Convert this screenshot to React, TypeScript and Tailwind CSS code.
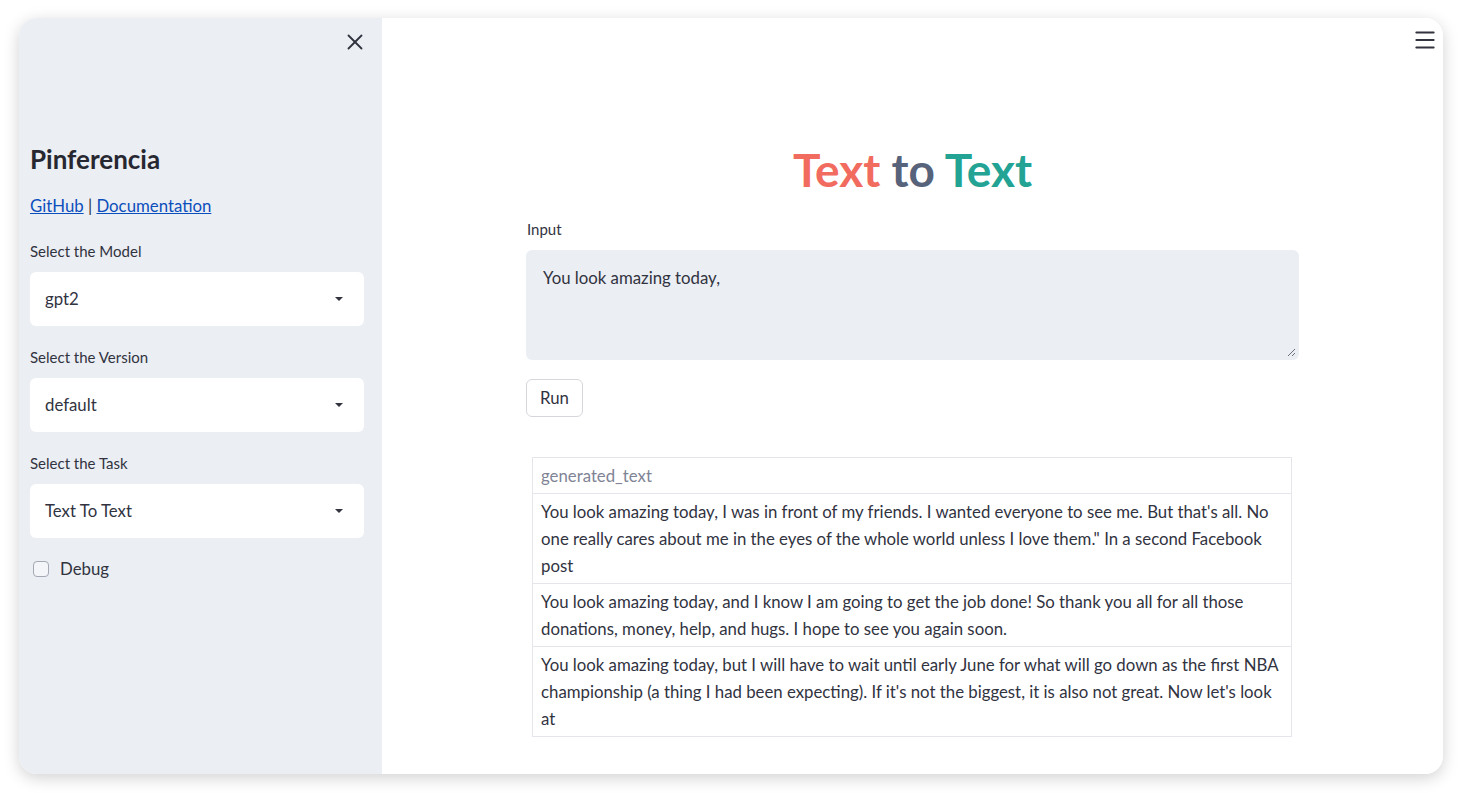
import { X, Menu } from 'lucide-react';

const rows = [
  `You look amazing today, I was in front of my friends. I wanted everyone to see me. But that's all. No one really cares about me in the eyes of the whole world unless I love them." In a second Facebook post`,
  `You look amazing today, and I know I am going to get the job done! So thank you all for all those donations, money, help, and hugs. I hope to see you again soon.`,
  `You look amazing today, but I will have to wait until early June for what will go down as the first NBA championship (a thing I had been expecting). If it's not the biggest, it is also not great. Now let's look at`,
];

function SelectBox({ value }: { value: string }) {
  return (
    <div className="mt-[11px] h-[54px] rounded-md bg-white flex items-center justify-between pl-[15px] pr-[20px]">
      <span className="text-[16.8px] text-[#31333f]">{value}</span>
      <svg width="10" height="6" viewBox="0 0 10 6">
        <path d="M1 1h8L5 5z" fill="#31333f" />
      </svg>
    </div>
  );
}

function Label({ children, className = '' }: { children: React.ReactNode; className?: string }) {
  return <div className={`text-[15px] leading-5 text-[#31333f] ${className}`}>{children}</div>;
}

export default function App() {
  return (
    <div
      className="h-[793px] w-full bg-white pt-[18px] pl-[19px] pr-[18px] pb-[19px]"
      style={{ fontFamily: 'Lato, "Liberation Sans", sans-serif' }}
    >
      <div className="h-full flex rounded-[18px] overflow-hidden shadow-[0_4px_16px_rgba(0,0,0,0.18)]">
        <aside className="w-[363px] shrink-0 bg-[#ebeef3] flex flex-col pl-[11px] pr-[18px]">
          <div className="flex justify-end pt-[11px] -mr-[4px]">
            <X size={26} strokeWidth={1.7} className="text-[#31333f]" />
          </div>
          <h2 className="mt-[88px] text-[26px] leading-8 font-bold text-[#262730]">Pinferencia</h2>
          <div className="mt-[19px] text-[16.8px] leading-6 text-[#31333f]">
            <a className="text-[#0b4fbc] underline" href="#">GitHub</a> |{' '}
            <a className="text-[#0b4fbc] underline" href="#">Documentation</a>
          </div>
          <Label className="mt-[23px]">Select the Model</Label>
          <SelectBox value="gpt2" />
          <Label className="mt-[21px]">Select the Version</Label>
          <SelectBox value="default" />
          <Label className="mt-[21px]">Select the Task</Label>
          <SelectBox value="Text To Text" />
          <div className="mt-[19px] flex items-center gap-[11px] pl-[3px] h-6">
            <div className="size-4 rounded-[4px] border border-[#a3a8b4] bg-[#f4f5f8]" />
            <span className="text-[16.8px] text-[#31333f]">Debug</span>
          </div>
        </aside>
        <main className="relative flex-1 bg-white">
          <div className="absolute right-[5px] top-[9px]">
            <Menu size={26} strokeWidth={1.8} className="text-[#31333f]" />
          </div>
          <div className="w-[773px] mx-auto pt-[124px]">
            <h1 className="text-center text-[46px] leading-[56px] font-bold">
              <span className="text-[#f26b5f]">Text</span>{' '}
              <span className="text-[#57637a]">to</span>{' '}
              <span className="text-[#22a394]">Text</span>
            </h1>
            <Label className="mt-[21px] pl-px">Input</Label>
            <div className="relative mt-[11px] h-[110px] rounded-md bg-[#ebeef3] pl-[17px] pt-[16px] text-[16.8px] leading-6 text-[#31333f]">
              You look amazing today,
              <svg className="absolute right-[3px] bottom-[3px]" width="9" height="9" viewBox="0 0 9 9">
                <path d="M8 1L1 8M8 5L5 8" stroke="#6b6f7b" strokeWidth="1" />
              </svg>
            </div>
            <button className="mt-[19px] h-[38px] w-[57px] rounded-md border border-[#d5d7dd] bg-white text-[16.8px] text-[#31333f]">
              Run
            </button>
            <table className="mt-[40px] ml-[6px] w-[760px] border-collapse text-[16.8px] leading-[27px] text-[#31333f]">
              <thead>
                <tr>
                  <th className="border border-[#e4e6eb] px-2 py-[4px] text-left font-normal text-[#808495]">
                    generated_text
                  </th>
                </tr>
              </thead>
              <tbody>
                {rows.map((r, i) => (
                  <tr key={i}>
                    <td className="border border-[#e4e6eb] px-2 py-[4px]">{r}</td>
                  </tr>
                ))}
              </tbody>
            </table>
          </div>
        </main>
      </div>
    </div>
  );
}
